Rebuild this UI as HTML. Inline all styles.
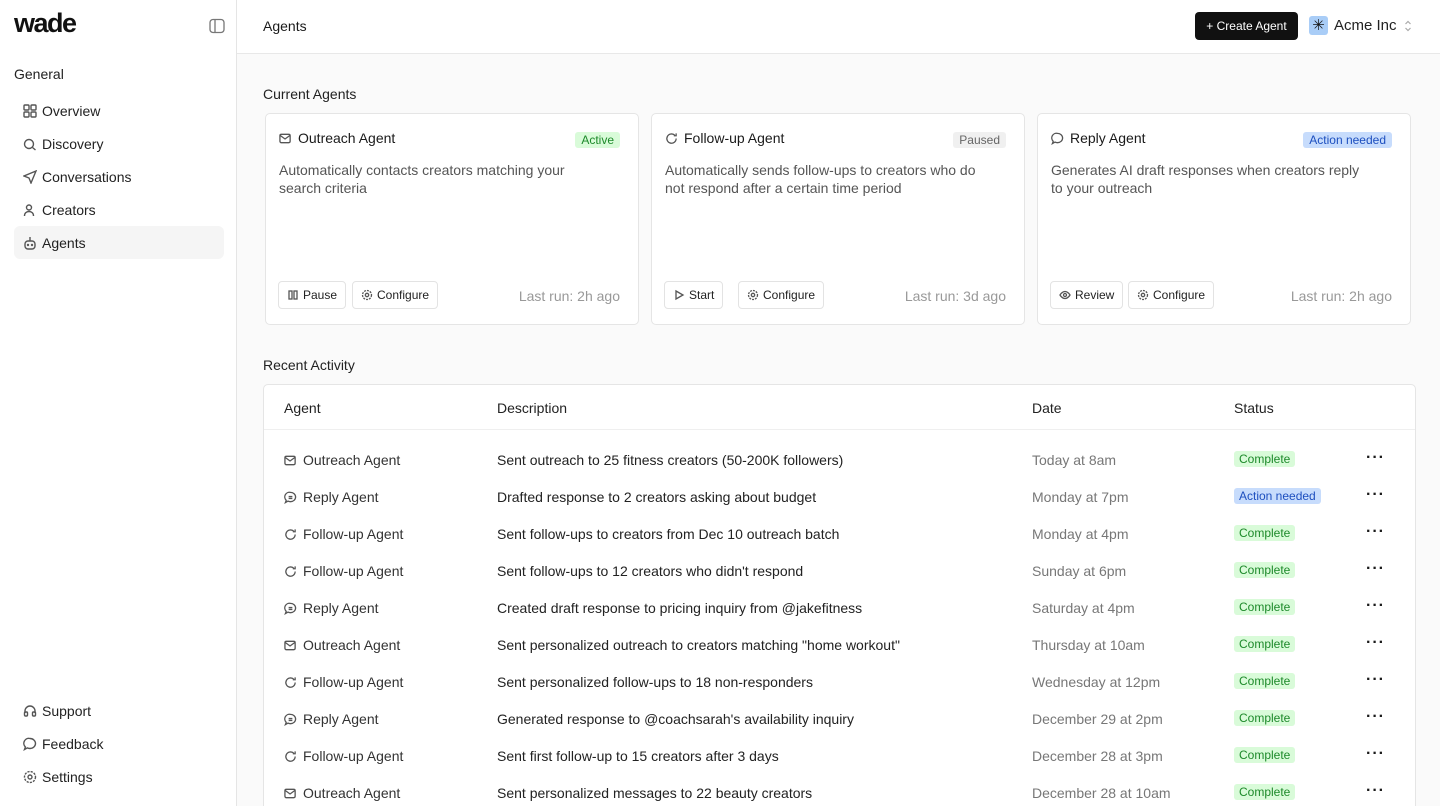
<!DOCTYPE html>
<html><head><meta charset="utf-8"><style>
*{box-sizing:border-box;margin:0;padding:0}
html,body{width:1440px;height:806px;overflow:hidden}
body{font-family:"Liberation Sans",sans-serif;background:#fafafa;color:#1a1a1a;position:relative;font-size:14px}
.side{position:absolute;left:0;top:0;width:237px;height:806px;background:#fff;border-right:1px solid #e5e5e5}
.logo{position:absolute;left:14px;top:8px;font-size:27px;font-weight:700;letter-spacing:-1.5px;color:#111}
.nav{position:absolute;left:14px;width:210px;height:33px;display:flex;align-items:center;padding-left:9px;font-size:14px;color:#222;border-radius:6px}
.nav svg{width:14px;height:14px;margin-right:5px;stroke:#555;fill:none;stroke-width:1.4}
.hdr{position:absolute;left:237px;top:0;right:0;height:54px;background:#fff;border-bottom:1px solid #e8e8e8}
.card{position:absolute;top:113px;width:374px;height:212px;background:#fff;border:1px solid #e5e5e5;border-radius:5px}
.ct{position:absolute;left:13px;top:16px;font-size:14px;display:flex;align-items:center}
.ct svg,.ic{width:13px;height:13px;stroke:#555;fill:none;stroke-width:1.4;margin-right:6px}
.badge{position:absolute;right:18px;top:18px;font-size:12px;padding:1px 6px;border-radius:3px}
.g{background:#d9fbd9;color:#1d8a2a}.b{background:#c7dcfc;color:#1d4fbf}.p{background:#f0f0f0;color:#666}
.cd{position:absolute;left:13px;top:47px;width:320px;font-size:14px;line-height:18px;color:#555}
.btn{position:absolute;top:167px;height:28px;border:1px solid #e3e3e3;border-radius:4px;font-size:12px;display:flex;align-items:center;padding:0 8px;color:#222}
.btn svg{width:12px;height:12px;stroke:#555;fill:none;stroke-width:1.3;margin-right:4px}
.lr{position:absolute;right:18px;top:174px;color:#999;font-size:14px}
.sec{position:absolute;left:263px;font-size:14px;color:#222}
.tbl{position:absolute;left:263px;top:384px;width:1153px;height:440px;background:#fff;border:1px solid #e5e5e5;border-radius:5px}
.th{position:absolute;top:15px;font-size:14px;color:#222}
.row{position:absolute;left:0;width:100%;height:20px;font-size:14px}
.row span{position:absolute;top:0}
.row .a{left:20px;display:flex;align-items:center;color:#333}
.row .d{left:233px;color:#222}
.row .t{left:768px;color:#777}
.row .s{left:970px;font-size:12px;padding:1px 5px;border-radius:3px;top:-1px}
.row .m{left:1102px;font-size:16px;letter-spacing:1px;font-weight:700;top:-1px;line-height:14px}
</style></head><body>
<div class="side">
<div class="logo">wade</div>
<svg style="position:absolute;left:209px;top:18px" width="16" height="16" viewBox="0 0 16 16" fill="none" stroke="#777" stroke-width="1.3"><rect x="1" y="1.5" width="14" height="13" rx="3"/><line x1="6" y1="2" x2="6" y2="14"/></svg>
<div style="position:absolute;left:14px;top:66px;font-size:14px;color:#222">General</div>
<div class="nav" style="top:94px"><svg viewBox="0 0 14 14"><rect x="1" y="1" width="5" height="5" rx="1"/><rect x="8" y="1" width="5" height="5" rx="1"/><rect x="1" y="8" width="5" height="5" rx="1"/><rect x="8" y="8" width="5" height="5" rx="1"/></svg>Overview</div>
<div class="nav" style="top:127px"><svg viewBox="0 0 14 14"><circle cx="6" cy="7" r="4.5"/><line x1="9.5" y1="10.5" x2="12.5" y2="13"/></svg>Discovery</div>
<div class="nav" style="top:160px"><svg viewBox="0 0 14 14"><path d="M13 1L1 6l5 2 2 5z"/></svg>Conversations</div>
<div class="nav" style="top:193px"><svg viewBox="0 0 14 14"><circle cx="6" cy="4.5" r="2.5"/><path d="M1.5 13c0-3 2-4.5 4.5-4.5s4.5 1.5 4.5 4.5"/></svg>Creators</div>
<div class="nav" style="top:226px;background:#f5f5f5"><svg viewBox="0 0 14 14"><rect x="2" y="5" width="10" height="8" rx="3"/><line x1="7" y1="1" x2="7" y2="5"/><circle cx="5" cy="9" r=".5"/><circle cx="9" cy="9" r=".5"/></svg>Agents</div>
<div class="nav" style="top:694px"><svg viewBox="0 0 14 14"><path d="M2 9V7a5 5 0 0110 0v2"/><rect x="1.5" y="8" width="3" height="4" rx="1"/><rect x="9.5" y="8" width="3" height="4" rx="1"/></svg>Support</div>
<div class="nav" style="top:727px"><svg viewBox="0 0 14 14"><path d="M7 1.5a5.5 5 0 110 10c-1 0-2-.2-2.7-.6L1.5 12.5l.9-2.5A5 5 0 017 1.5z"/></svg>Feedback</div>
<div class="nav" style="top:760px"><svg viewBox="0 0 14 14"><circle cx="7" cy="7" r="2"/><circle cx="7" cy="7" r="5.5" stroke-dasharray="2.2 1.1"/></svg>Settings</div>
</div>
<div class="hdr">
<div style="position:absolute;left:26px;top:18px;font-size:14px">Agents</div>
<div style="position:absolute;left:958px;top:12px;width:103px;height:28px;background:#111;border-radius:4px;color:#fff;font-size:12px;display:flex;align-items:center;justify-content:center">+ Create Agent</div>
<div style="position:absolute;left:1072px;top:16px;width:19px;height:19px;background:#a9cdf7;border-radius:3px;color:#111;font-size:15px;line-height:19px;text-align:center">✳</div>
<div style="position:absolute;left:1097px;top:17px;font-size:15px;color:#222">Acme Inc</div>
<svg style="position:absolute;left:1167px;top:19px" width="8" height="14" viewBox="0 0 8 14" fill="none" stroke="#aaa" stroke-width="1.2"><path d="M1.5 5L4 2.5 6.5 5M1.5 9L4 11.5 6.5 9"/></svg>
</div>
<div class="sec" style="top:86px">Current Agents</div>
<div class="card" style="left:265px"><div class="ct"><svg viewBox="0 0 14 14"><rect x="1" y="2.5" width="11" height="9" rx="1.5"/><path d="M1 3.5l5.5 4 5.5-4"/></svg>Outreach Agent</div><span class="badge g">Active</span><div class="cd">Automatically contacts creators matching your search criteria</div>
<div class="btn" style="left:12px"><svg viewBox="0 0 12 12"><rect x="2" y="2" width="3" height="8"/><rect x="7" y="2" width="3" height="8"/></svg>Pause</div><div class="btn" style="left:86px"><svg viewBox="0 0 12 12"><circle cx="6" cy="6" r="1.7"/><circle cx="6" cy="6" r="4.5" stroke-dasharray="2 1"/></svg>Configure</div><div class="lr">Last run: 2h ago</div></div>
<div class="card" style="left:651px"><div class="ct"><svg viewBox="0 0 14 14"><path d="M12 7a5 5 0 11-1.5-3.5M12 1.5v2.5h-2.5"/></svg>Follow-up Agent</div><span class="badge p">Paused</span><div class="cd">Automatically sends follow-ups to creators who do not respond after a certain time period</div>
<div class="btn" style="left:12px"><svg viewBox="0 0 12 12"><path d="M3 2l7 4-7 4z"/></svg>Start</div><div class="btn" style="left:86px"><svg viewBox="0 0 12 12"><circle cx="6" cy="6" r="1.7"/><circle cx="6" cy="6" r="4.5" stroke-dasharray="2 1"/></svg>Configure</div><div class="lr">Last run: 3d ago</div></div>
<div class="card" style="left:1037px"><div class="ct"><svg viewBox="0 0 14 14"><path d="M7 1.5a5.5 5 0 110 10c-1 0-2-.2-2.7-.6L1.5 12.5l.9-2.5A5 5 0 017 1.5z"/></svg>Reply Agent</div><span class="badge b">Action needed</span><div class="cd">Generates AI draft responses when creators reply to your outreach</div>
<div class="btn" style="left:12px"><svg viewBox="0 0 12 12"><path d="M1 6s2-3.5 5-3.5S11 6 11 6s-2 3.5-5 3.5S1 6 1 6z"/><circle cx="6" cy="6" r="1.5"/></svg>Review</div><div class="btn" style="left:90px"><svg viewBox="0 0 12 12"><circle cx="6" cy="6" r="1.7"/><circle cx="6" cy="6" r="4.5" stroke-dasharray="2 1"/></svg>Configure</div><div class="lr">Last run: 2h ago</div></div>
<div class="sec" style="top:357px">Recent Activity</div>
<div class="tbl">
<div class="th" style="left:20px">Agent</div><div class="th" style="left:233px">Description</div><div class="th" style="left:768px">Date</div><div class="th" style="left:970px">Status</div>
<div style="position:absolute;left:0;right:0;top:44px;border-top:1px solid #efefef"></div>
<div id="rows"></div>
</div>
<script>
var O='<svg class="ic" viewBox="0 0 14 14"><rect x="1" y="2.5" width="11" height="9" rx="1.5"/><path d="M1 3.5l5.5 4 5.5-4"/></svg>',
R='<svg class="ic" viewBox="0 0 14 14"><path d="M7 1.5a5.5 5 0 110 10c-1 0-2-.2-2.7-.6L1.5 12.5l.9-2.5A5 5 0 017 1.5z"/><path d="M5 6h4M5 8h4"/></svg>',
F='<svg class="ic" viewBox="0 0 14 14"><path d="M12 7a5 5 0 11-1.5-3.5M12 1.5v2.5h-2.5"/></svg>';
var d=[[O,"Outreach Agent","Sent outreach to 25 fitness creators (50-200K followers)","Today at 8am"],
[R,"Reply Agent","Drafted response to 2 creators asking about budget","Monday at 7pm",1],
[F,"Follow-up Agent","Sent follow-ups to creators from Dec 10 outreach batch","Monday at 4pm"],
[F,"Follow-up Agent","Sent follow-ups to 12 creators who didn't respond","Sunday at 6pm"],
[R,"Reply Agent","Created draft response to pricing inquiry from @jakefitness","Saturday at 4pm"],
[O,"Outreach Agent","Sent personalized outreach to creators matching \"home workout\"","Thursday at 10am"],
[F,"Follow-up Agent","Sent personalized follow-ups to 18 non-responders","Wednesday at 12pm"],
[R,"Reply Agent","Generated response to @coachsarah's availability inquiry","December 29 at 2pm"],
[F,"Follow-up Agent","Sent first follow-up to 15 creators after 3 days","December 28 at 3pm"],
[O,"Outreach Agent","Sent personalized messages to 22 beauty creators","December 28 at 10am"]];
var h='';d.forEach(function(r,i){h+='<div class="row" style="top:'+(67+i*37)+'px"><span class="a">'+r[0]+r[1]+'</span><span class="d">'+r[2]+'</span><span class="t">'+r[3]+'</span><span class="s '+(r[4]?'b':'g')+'">'+(r[4]?'Action needed':'Complete')+'</span><span class="m">···</span></div>'});
document.getElementById('rows').innerHTML=h;
</script>
</body></html>
